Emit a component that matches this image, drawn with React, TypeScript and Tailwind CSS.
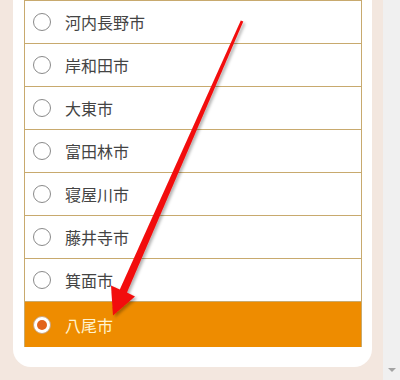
const cities = [
  "河内長野市",
  "岸和田市",
  "大東市",
  "富田林市",
  "寝屋川市",
  "藤井寺市",
  "箕面市",
];

function Radio({ checked }: { checked?: boolean }) {
  if (checked)
    return (
      <span className="flex h-[18px] w-[18px] items-center justify-center rounded-full border border-[#c9a27a] bg-white">
        <span className="h-[10px] w-[10px] rounded-full bg-[#e2631b]" />
      </span>
    );
  return <span className="h-[18px] w-[18px] rounded-full border border-[#8a8a8a] bg-white" />;
}

function Arrow() {
  // tapered red arrow from upper right down to the selected row
  return (
    <svg className="pointer-events-none absolute left-0 top-0" width="400" height="380">
      <defs>
        <filter id="sh" x="-20%" y="-20%" width="140%" height="140%">
          <feDropShadow dx="2" dy="2" stdDeviation="1.5" floodColor="#000" floodOpacity="0.3" />
        </filter>
      </defs>
      <polygon
        filter="url(#sh)"
        fill="#f20d0d"
        points="243.3,21.6 240.8,20.4 119.8,289.4 111,285.5 113,315.5 135,296.5 127,292.6"
      />
    </svg>
  );
}

export default function App() {
  return (
    <div className="relative flex h-[380px] w-[400px] overflow-hidden bg-[#f3e7df] font-['Noto_Sans_CJK_JP',sans-serif]">
      <div className="ml-[13px] flex w-[359px] flex-col self-start rounded-b-[18px] bg-white pb-[20px] pl-[11px] pr-[10px]">
        <ul className="border-x border-t border-[#c8aa6e]">
          {cities.map((c) => (
            <li
              key={c}
              className="flex h-[43px] items-center border-b border-[#c8aa6e] pl-[8px] text-[16px] text-[#444]"
            >
              <Radio />
              <span className="ml-[14px] leading-none">{c}</span>
            </li>
          ))}
          <li className="flex h-[45px] items-center bg-[#ee8c00] pl-[8px] text-[16px] text-[#fff3cf]">
            <Radio checked />
            <span className="ml-[14px] leading-none">八尾市</span>
          </li>
        </ul>
      </div>
      <div className="ml-[11px] flex w-[17px] flex-col justify-end bg-[#f0f0f0] pb-[8px]">
        <span className="mx-auto h-0 w-0 border-x-[4px] border-t-[4px] border-x-transparent border-t-[#a3a3a3]" />
      </div>
      <Arrow />
    </div>
  );
}
